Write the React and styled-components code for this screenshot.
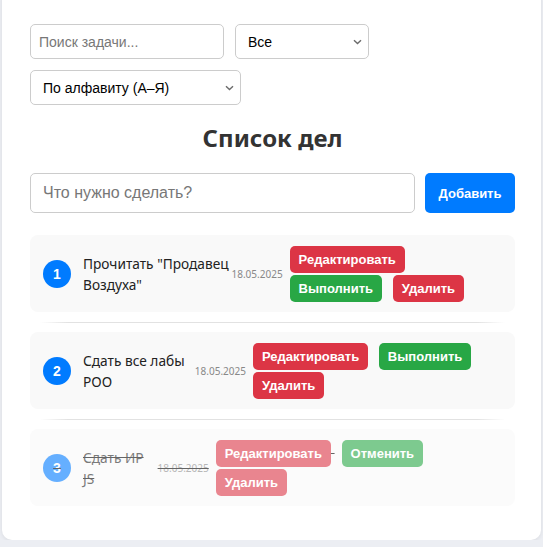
import React from 'react'
import styled, { createGlobalStyle } from 'styled-components'

const GlobalStyle = createGlobalStyle`
  html, body {
    margin: 0;
    padding: 0;
    background: #eceef3;
    font-family: "Noto Sans", "Open Sans", sans-serif;
  }
`

const tasks = [
  { id: 1, text: 'Прочитать "Продавец Воздуха"', date: '18.05.2025', done: false },
  { id: 2, text: 'Сдать все лабы РОО', date: '18.05.2025', done: false },
  { id: 3, text: 'Сдать ИР JS', date: '18.05.2025', done: true },
]

const Chevron = () => (
  <ChevronIcon width='9' height='6' viewBox='0 0 9 6'>
    <path d='M1 1.2 L4.5 4.6 L8 1.2' fill='none' stroke='#6b6b6b' strokeWidth='1.4' />
  </ChevronIcon>
)

const App = () => {
  return (
    <>
      <GlobalStyle />
      <Card>
        <Filters>
          <SearchInput placeholder='Поиск задачи...' />
          <SelectWrap width={134}>
            <Select defaultValue='all'>
              <option value='all'>Все</option>
              <option value='active'>Активные</option>
              <option value='done'>Выполненные</option>
            </Select>
            <Chevron />
          </SelectWrap>
          <SelectWrap width={211}>
            <Select defaultValue='az'>
              <option value='az'>По алфавиту (А–Я)</option>
              <option value='za'>По алфавиту (Я–А)</option>
            </Select>
            <Chevron />
          </SelectWrap>
        </Filters>

        <Title>Список дел</Title>

        <AddRow>
          <AddInput placeholder='Что нужно сделать?' />
          <AddButton>Добавить</AddButton>
        </AddRow>

        <List>
          {tasks.map((task, i) => (
            <React.Fragment key={task.id}>
              {i > 0 && <Separator />}
              <Item done={task.done}>
                <Number>{task.id}</Number>
                <TaskText>{task.text}</TaskText>
                <TaskDate>{task.date}</TaskDate>
                <Actions>
                  <ActionButton color='red'>Редактировать</ActionButton>{' '}
                  {task.done ? (
                    <ActionButton color='green'>Отменить</ActionButton>
                  ) : (
                    <ActionButton color='green'>Выполнить</ActionButton>
                  )}{' '}
                  <ActionButton color='red'>Удалить</ActionButton>
                </Actions>
              </Item>
            </React.Fragment>
          ))}
        </List>
      </Card>
    </>
  )
}

const Card = styled.div`
  margin: -12px 2px 0 2px;
  padding: 36px 26px 34px 28px;
  background: #fff;
  border-radius: 10px;
  box-shadow: 0 1px 4px rgba(0, 0, 0, 0.08);
`

const Filters = styled.div`
  display: flex;
  flex-wrap: wrap;
  gap: 11px;
`

const SearchInput = styled.input`
  box-sizing: border-box;
  width: 194px;
  height: 35px;
  padding: 0 8px;
  border: 1px solid #ccc;
  border-radius: 5px;
  font-family: "Liberation Sans", Arial, sans-serif;
  font-size: 14px;
  color: #222;
  outline: none;

  &::placeholder {
    color: #777;
  }
`

const SelectWrap = styled.div`
  position: relative;
  width: ${p => p.width}px;
  height: 35px;
`

const Select = styled.select`
  appearance: none;
  box-sizing: border-box;
  width: 100%;
  height: 100%;
  padding: 0 20px 0 12px;
  border: 1px solid #ccc;
  border-radius: 5px;
  background: #fff;
  font-family: "Liberation Sans", Arial, sans-serif;
  font-size: 14px;
  color: #000;
  outline: none;
`

const ChevronIcon = styled.svg`
  position: absolute;
  right: 7px;
  top: 15px;
  pointer-events: none;
`

const Title = styled.h2`
  margin: 17px 0 19px;
  text-align: center;
  font-size: 24px;
  line-height: 32px;
  font-weight: 700;
  color: #333;
`

const AddRow = styled.div`
  display: flex;
  gap: 10px;
`

const AddInput = styled.input`
  box-sizing: border-box;
  flex: 1;
  height: 40px;
  padding: 0 12px;
  border: 1px solid #ccc;
  border-radius: 5px;
  font-family: "Liberation Sans", Arial, sans-serif;
  font-size: 16px;
  outline: none;

  &::placeholder {
    color: #777;
  }
`

const AddButton = styled.button`
  width: 90px;
  height: 40px;
  border: none;
  border-radius: 5px;
  background: #007bff;
  color: #fff;
  font-family: "Liberation Sans", Arial, sans-serif;
  font-size: 13px;
  font-weight: 700;
`

const List = styled.div`
  margin-top: 22px;
`

const Separator = styled.div`
  height: 1px;
  margin: 10px 10px 9px;
  background: linear-gradient(to right, rgba(226, 226, 226, 0), #e2e2e2 6%, #e2e2e2 94%, rgba(226, 226, 226, 0));
`

const Item = styled.div`
  display: flex;
  align-items: center;
  padding: 10px 13px 9px;
  background: #f9f9f9;
  border-radius: 8px;
  opacity: ${p => (p.done ? 0.6 : 1)};
  text-decoration: ${p => (p.done ? 'line-through' : 'none')};
`

const Number = styled.div`
  flex-shrink: 0;
  display: flex;
  align-items: center;
  justify-content: center;
  width: 28px;
  height: 28px;
  margin-right: 12px;
  border-radius: 50%;
  background: #007bff;
  color: #fff;
  font-family: "Liberation Sans", Arial, sans-serif;
  font-size: 14px;
  font-weight: 700;
`

const TaskText = styled.div`
  font-size: 13.7px;
  line-height: 21px;
  color: #222;
`

const TaskDate = styled.div`
  flex-shrink: 0;
  font-size: 10px;
  color: #888;
`

const colors = {
  red: '#dc3545',
  green: '#28a745',
}

const Actions = styled.div`
  font-size: 14px;
  line-height: 29px;
`

const ActionButton = styled.button`
  display: inline-block;
  vertical-align: top;
  margin: 1px 0 1px 7px;
  padding: 6px 9px;
  border: none;
  border-radius: 5px;
  background: ${p => colors[p.color]};
  color: #fff;
  font-family: "Liberation Sans", Arial, sans-serif;
  font-size: 13px;
  line-height: 15px;
  font-weight: 700;
`

export default App
